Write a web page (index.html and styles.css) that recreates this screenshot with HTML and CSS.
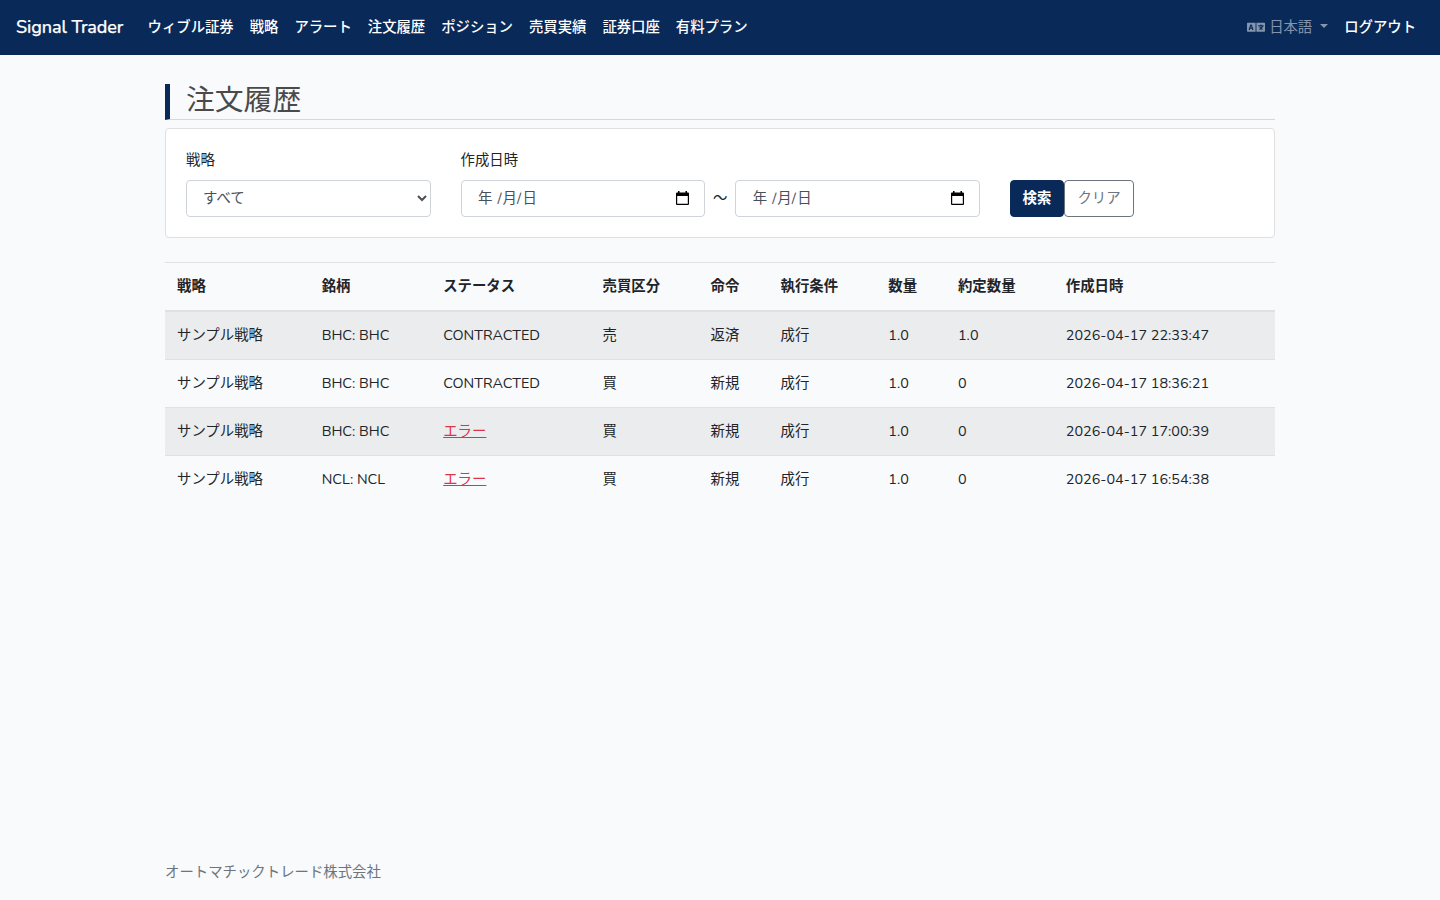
FILE: index.html
```
<!DOCTYPE html>
<html lang="ja">
<head>
    <meta charset="UTF-8">
    <meta name="viewport" content="width=device-width, initial-scale=1.0">
    <title>注文履歴 - Signal Trader</title>
    <link rel="stylesheet" href="styles.css">
</head>
<body>
    <nav class="navbar">
        <a class="navbar-brand" href="#">Signal Trader</a>
        <ul class="navbar-nav">
            <li><a class="nav-link" href="#">ウィブル証券</a></li>
            <li><a class="nav-link" href="#">戦略</a></li>
            <li><a class="nav-link" href="#">アラート</a></li>
            <li><a class="nav-link" href="#">注文履歴</a></li>
            <li><a class="nav-link" href="#">ポジション</a></li>
            <li><a class="nav-link" href="#">売買実績</a></li>
            <li><a class="nav-link" href="#">証券口座</a></li>
            <li><a class="nav-link" href="#">有料プラン</a></li>
        </ul>
        <ul class="navbar-nav navbar-right">
            <li>
                <a class="nav-link lang-toggle" href="#">
                    <svg class="lang-icon" viewBox="0 0 640 512" fill="currentColor">
                        <path d="M152.1 236.2c-3.5-12.1-7.8-33.2-7.8-33.2h-.5s-4.3 21.1-7.8 33.2l-11.1 37.5H163zM616 96H336v320h280c13.300 0 24-10.700 24-24V120c0-13.300-10.700-24-24-24zm-24 120c0 6.600-5.400 12-12 12h-11.400c-6.900 23.600-21.700 47.400-42.700 69.900 8.400 6.400 17.100 12.500 26.100 18 5.500 3.400 7.300 10.500 4.100 16.200l-7.900 13.900c-3.400 5.900-10.900 7.800-16.700 4.300-12.600-7.800-24.500-16.100-35.400-24.900-10.900 8.700-22.700 17.100-35.400 24.900-5.800 3.500-13.300 1.600-16.700-4.300l-7.900-13.900c-3.200-5.600-1.400-12.800 4.200-16.200 9.300-5.700 18-11.700 26.100-18-7.900-8.400-14.900-17-21-25.700-4-5.700-2.200-13.600 3.700-17.100l6.500-3.900 7.300-4.300c5.400-3.200 12.400-1.700 16 3.400 5 7 10.800 14 17.400 20.900 13.500-14.200 23.800-28.900 30-43.200H412c-6.600 0-12-5.400-12-12v-16c0-6.600 5.400-12 12-12h64v-16c0-6.600 5.400-12 12-12h16c6.600 0 12 5.400 12 12v16h64c6.600 0 12 5.400 12 12zM0 120v272c0 13.300 10.700 24 24 24h280V96H24c-13.300 0-24 10.700-24 24zm58.900 216.100L116.400 167c1.700-4.900 6.200-8.100 11.400-8.100h32.500c5.100 0 9.700 3.300 11.400 8.100l57.500 169.100c2.600 7.800-3.100 15.900-11.400 15.900h-22.900a12 12 0 0 1-11.500-8.600l-9.400-31.900h-60.200l-9.100 31.800c-1.500 5.100-6.200 8.700-11.500 8.700H70.300c-8.200 0-14-8.100-11.400-15.900z"/>
                    </svg>
                    <span>日本語</span>
                    <span class="caret"></span>
                </a>
            </li>
            <li><a class="nav-link" href="#">ログアウト</a></li>
        </ul>
    </nav>

    <main class="container">
        <h1 class="page-title">注文履歴</h1>

        <form class="search-card">
            <div class="field">
                <label for="strategy">戦略</label>
                <select class="form-control" id="strategy">
                    <option>すべて</option>
                </select>
            </div>
            <div class="field-range">
                <label>作成日時</label>
                <div class="range">
                    <div class="form-control date-input" tabindex="0">
                        <span><span class="year">年</span>/<span class="month">月</span>/<span class="day">日</span></span>
                        <svg class="calendar" viewBox="0 0 13 14">
                            <path d="M2 0h1.500v1.500h6V0H11v1.500h1a1 1 0 0 1 1 1V13a1 1 0 0 1-1 1H1a1 1 0 0 1-1-1V2.500a1 1 0 0 1 1-1h1zM1.200 5v7.800h10.600V5z" fill-rule="evenodd"/>
                        </svg>
                    </div>
                    <span class="tilde">〜</span>
                    <div class="form-control date-input" tabindex="0">
                        <span><span class="year">年</span>/<span class="month">月</span>/<span class="day">日</span></span>
                        <svg class="calendar" viewBox="0 0 13 14">
                            <path d="M2 0h1.500v1.500h6V0H11v1.500h1a1 1 0 0 1 1 1V13a1 1 0 0 1-1 1H1a1 1 0 0 1-1-1V2.500a1 1 0 0 1 1-1h1zM1.200 5v7.800h10.600V5z" fill-rule="evenodd"/>
                        </svg>
                    </div>
                </div>
            </div>
            <div class="actions">
                <button type="submit" class="btn btn-primary">検索</button>
                <button type="reset" class="btn btn-outline">クリア</button>
            </div>
        </form>

        <table class="table">
            <thead>
                <tr>
                    <th class="col-strategy">戦略</th>
                    <th class="col-symbol">銘柄</th>
                    <th class="col-status">ステータス</th>
                    <th class="col-side">売買区分</th>
                    <th class="col-order">命令</th>
                    <th class="col-condition">執行条件</th>
                    <th class="col-qty">数量</th>
                    <th class="col-filled">約定数量</th>
                    <th>作成日時</th>
                </tr>
            </thead>
            <tbody>
                <tr>
                    <td>サンプル戦略</td>
                    <td>BHC: BHC</td>
                    <td>CONTRACTED</td>
                    <td>売</td>
                    <td>返済</td>
                    <td>成行</td>
                    <td>1.0</td>
                    <td>1.0</td>
                    <td>2026-04-17 22:33:47</td>
                </tr>
                <tr>
                    <td>サンプル戦略</td>
                    <td>BHC: BHC</td>
                    <td>CONTRACTED</td>
                    <td>買</td>
                    <td>新規</td>
                    <td>成行</td>
                    <td>1.0</td>
                    <td>0</td>
                    <td>2026-04-17 18:36:21</td>
                </tr>
                <tr>
                    <td>サンプル戦略</td>
                    <td>BHC: BHC</td>
                    <td><a class="error" href="#">エラー</a></td>
                    <td>買</td>
                    <td>新規</td>
                    <td>成行</td>
                    <td>1.0</td>
                    <td>0</td>
                    <td>2026-04-17 17:00:39</td>
                </tr>
                <tr>
                    <td>サンプル戦略</td>
                    <td>NCL: NCL</td>
                    <td><a class="error" href="#">エラー</a></td>
                    <td>買</td>
                    <td>新規</td>
                    <td>成行</td>
                    <td>1.0</td>
                    <td>0</td>
                    <td>2026-04-17 16:54:38</td>
                </tr>
            </tbody>
        </table>
    </main>

    <footer class="container footer">オートマチックトレード株式会社</footer>
</body>
</html>
```
FILE: styles.css
```
* {
    box-sizing: border-box;
}

body {
    margin: 0;
    min-height: 100vh;
    display: flex;
    flex-direction: column;
    background-color: #f8fafc;
    color: #212529;
    font-family: Nunito, "Noto Sans CJK JP", sans-serif;
    font-size: 14.4px;
    line-height: 23px;
}

a {
    color: inherit;
    text-decoration: none;
}

/* Navbar */
.navbar {
    display: flex;
    align-items: center;
    height: 55px;
    padding: 0 16px;
    background-color: #092a59;
    color: #fff;
}

.navbar-brand {
    width: 107.6px;
    margin-right: 16px;
    font-size: 18px;
    font-weight: 500;
    letter-spacing: -0.08px;
    white-space: nowrap;
    -webkit-text-stroke: 0.25px;
}

.navbar-nav {
    display: flex;
    margin: 0;
    padding: 0;
    list-style: none;
}

.nav-link {
    display: block;
    padding: 0 8px;
    font-weight: 500;
    letter-spacing: -0.04px;
}

.navbar-right {
    margin-left: auto;
}

.lang-toggle {
    display: flex;
    align-items: center;
    color: rgba(255, 255, 255, 0.5);
    font-weight: 400;
}

.lang-icon {
    width: 18px;
    height: 14.4px;
    margin: 0 4px 1px 0;
}

.caret {
    margin: 0 0 3px 8px;
    border-top: 4px solid;
    border-left: 4px solid transparent;
    border-right: 4px solid transparent;
}

/* Content */
.container {
    width: 1110px;
    margin: 0 auto;
}

.page-title {
    height: 36px;
    margin: 29px 0 8px;
    padding-left: 16px;
    border-left: 5px solid #092a59;
    border-bottom: 1px solid #d5d8db;
    color: #4a4a4a;
    font-size: 28.8px;
    font-weight: 400;
    line-height: 33px;
}

.search-card {
    display: flex;
    height: 110px;
    margin-bottom: 24px;
    padding: 20px;
    background-color: #fff;
    border: 1px solid #dfdfdf;
    border-radius: 4px;
}

.search-card label {
    display: block;
    margin-bottom: 8px;
}

.field {
    width: 244.5px;
    margin-right: 30px;
}

.field-range {
    width: 519.3px;
    margin-right: 30.2px;
}

.range {
    display: flex;
}

.form-control {
    display: block;
    width: 100%;
    height: 37px;
    padding: 5px 12px 7px;
    background-color: #fff;
    border: 1px solid #ced4da;
    border-radius: 4px;
    color: #495057;
    font-family: inherit;
    font-size: 14.4px;
    line-height: 23px;
}

.date-input {
    display: flex;
    justify-content: space-between;
    width: 244.5px;
    padding: 6px 15px 6px 16.5px;
}

.year {
    margin-right: 5px;
}

.month {
    margin-left: 1px;
}

.day {
    margin-left: 1.5px;
}

.calendar {
    width: 13px;
    height: 14px;
    margin-top: 4px;
    fill: #000;
}

.tilde {
    flex: 1;
    line-height: 37px;
    text-align: center;
}

.actions {
    display: flex;
    align-items: flex-start;
    padding-top: 31px;
}

.btn {
    height: 37px;
    padding: 0 12px;
    border: 1px solid;
    border-radius: 4px;
    font-family: inherit;
    font-size: 14.4px;
    line-height: 23px;
    white-space: nowrap;
}

.btn-primary {
    width: 54px;
    padding: 0 11px;
    background-color: #092a59;
    border-color: #092a59;
    color: #fff;
    font-weight: 700;
}

.btn-outline {
    width: 70px;
    background-color: transparent;
    border-color: #6c757d;
    color: #6c757d;
}

/* Order table */
.table {
    width: 100%;
    table-layout: fixed;
    border-collapse: collapse;
}

.table th,
.table td {
    height: 48px;
    padding: 12px;
    border-top: 1px solid #dee2e6;
    text-align: left;
    vertical-align: top;
    line-height: 23px;
    white-space: nowrap;
}

.table thead th {
    border-bottom: 2px solid #dee2e6;
    font-weight: 700;
}

.table tbody tr:nth-of-type(odd) {
    background-color: #ebecee;
}

.col-strategy {
    width: 144.7px;
}

.col-symbol {
    width: 121.5px;
}

.col-status {
    width: 159.3px;
}

.col-side {
    width: 108px;
}

.col-order {
    width: 70px;
}

.col-condition {
    width: 107.8px;
}

.col-qty {
    width: 69.7px;
}

.col-filled {
    width: 107.8px;
}

.error {
    color: #dc3545;
    text-decoration: underline;
}

.footer {
    margin-top: auto;
    padding-bottom: 16px;
    color: #6c757d;
}
```
